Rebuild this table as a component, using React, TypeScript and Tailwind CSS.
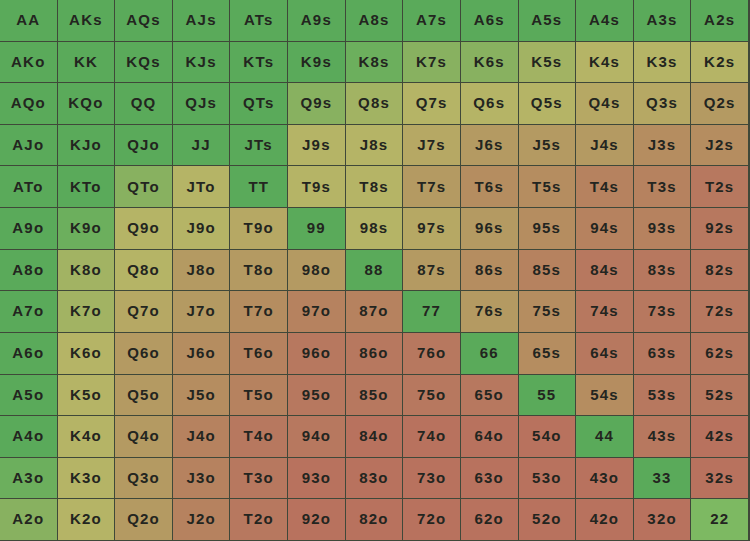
import React from "react";

const RANKS = ["A", "K", "Q", "J", "T", "9", "8", "7", "6", "5", "4", "3", "2"];

const PALETTE = [
  "bg-[#5aaa5a]", // 0 green
  "bg-[#6caf5d]", // 1
  "bg-[#88b160]", // 2
  "bg-[#a2b363]", // 3
  "bg-[#b5b466]", // 4 yellow
  "bg-[#b6a864]", // 5
  "bg-[#b49a62]", // 6 tan
  "bg-[#b58d60]", // 7
  "bg-[#b6825f]", // 8
  "bg-[#b7785f]", // 9 red
  "bg-[#b8725e]", // 10
  "bg-[#7db962]", // 11 light green (22)
];

const HEAT: number[][] = [
  [0, 0, 0, 0, 0, 0, 0, 0, 0, 0, 0, 0, 0],
  [0, 0, 0, 0, 0, 0, 1, 2, 2, 3, 4, 4, 4],
  [0, 0, 0, 0, 0, 2, 3, 4, 4, 4, 5, 5, 6],
  [0, 0, 0, 0, 0, 4, 4, 5, 6, 6, 6, 7, 7],
  [0, 0, 2, 4, 0, 4, 4, 6, 7, 7, 8, 8, 9],
  [0, 1, 4, 4, 5, 0, 4, 5, 6, 7, 8, 8, 9],
  [0, 3, 4, 6, 6, 6, 0, 6, 7, 8, 9, 9, 9],
  [0, 3, 5, 6, 7, 8, 8, 0, 6, 7, 9, 9, 9],
  [0, 4, 6, 7, 8, 9, 9, 9, 0, 7, 9, 9, 9],
  [0, 4, 6, 7, 8, 9, 9, 9, 9, 0, 7, 9, 9],
  [0, 4, 6, 8, 9, 9, 10, 10, 10, 10, 0, 9, 10],
  [1, 4, 6, 8, 9, 10, 10, 10, 10, 10, 10, 0, 10],
  [2, 4, 6, 8, 9, 10, 10, 10, 10, 10, 10, 10, 11],
];

function label(r: number, c: number): string {
  if (r === c) return RANKS[r] + RANKS[c];
  if (c > r) return RANKS[r] + RANKS[c] + "s";
  return RANKS[c] + RANKS[r] + "o";
}

function Cell({ r, c }: { r: number; c: number }) {
  return (
    <div
      className={`flex items-center justify-center text-[15px] font-bold tracking-[1.2px] text-[#232520] ${PALETTE[HEAT[r][c]]}`}
    >
      {label(r, c)}
    </div>
  );
}

export default function App() {
  return (
    <div className="w-[750px] h-[541px] bg-[#3f4839] pr-[2px] pb-px overflow-hidden font-['Liberation_Sans',Arial,sans-serif]">
      <div className="grid h-full w-full grid-cols-[repeat(13,minmax(0,1fr))] grid-rows-[repeat(13,minmax(0,1fr))] gap-px">
        {RANKS.map((_, r) =>
          RANKS.map((__, c) => <Cell key={`${r}-${c}`} r={r} c={c} />)
        )}
      </div>
    </div>
  );
}
